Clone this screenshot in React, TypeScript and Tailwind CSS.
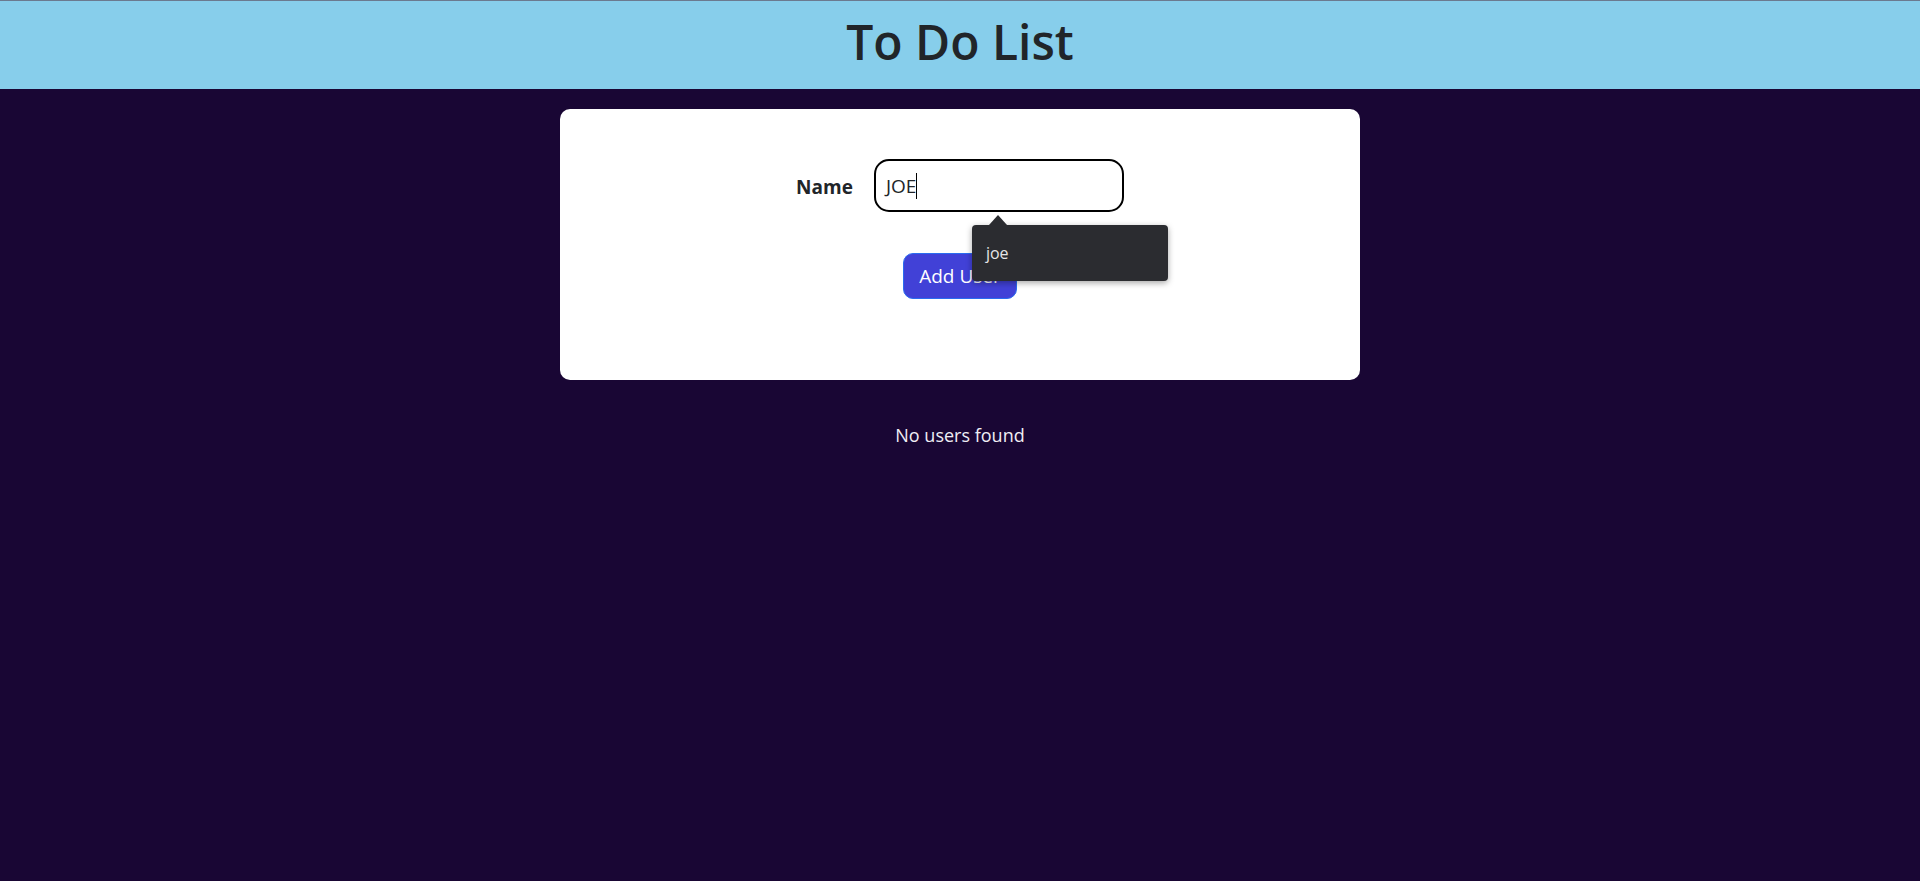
import React from "react";

export default function App() {
  return (
    <div
      className="min-h-[881px] w-full bg-[#190634]"
      style={{ fontFamily: '"Open Sans", "Noto Sans", sans-serif' }}
    >
      <header className="flex h-[89px] items-center justify-center border-t border-[#6b7a8f] bg-[#87ceeb]">
        <h1 className="-mt-[6px] text-[48px] font-semibold leading-none text-[#212529]">
          To Do List
        </h1>
      </header>

      <main className="flex flex-col items-center">
        <div className="mt-[20px] flex h-[271px] w-[800px] flex-col items-center rounded-[10px] bg-white pt-[50px]">
          <div className="flex items-center gap-[21px]">
            <label className="pt-[4px] text-[19px] font-bold text-[#212529]">Name</label>
            <div className="relative">
              <div className="flex h-[53px] w-[250px] items-center rounded-[15px] border-2 border-black pl-[10px] pt-[1px] text-[19px] text-[#212529]">
                <span>JOE</span>
                <span className="inline-block h-[26px] w-px bg-black" />
              </div>
              <div className="absolute left-[98px] top-[66px] z-10 h-[56px] w-[196px] rounded-[4px] bg-[#2b2c30] shadow-[0_2px_6px_rgba(0,0,0,0.35)]">
                <div className="absolute -top-[10px] left-[17px] h-0 w-0 border-x-[9px] border-b-[10px] border-x-transparent border-b-[#2b2c30]" />
                <div className="pl-[14px] pt-[20px] text-[16px] leading-none text-[#e6e6e6]">joe</div>
              </div>
            </div>
          </div>
          <button className="mt-[41px] h-[46px] rounded-[10px] border border-[#2a6cf0] bg-[#4141d7] px-[15px] text-[19px] text-white">
            Add User
          </button>
        </div>
        <p className="mt-[42px] text-[18px] text-[#f0eef5]">No users found</p>
      </main>
    </div>
  );
}
